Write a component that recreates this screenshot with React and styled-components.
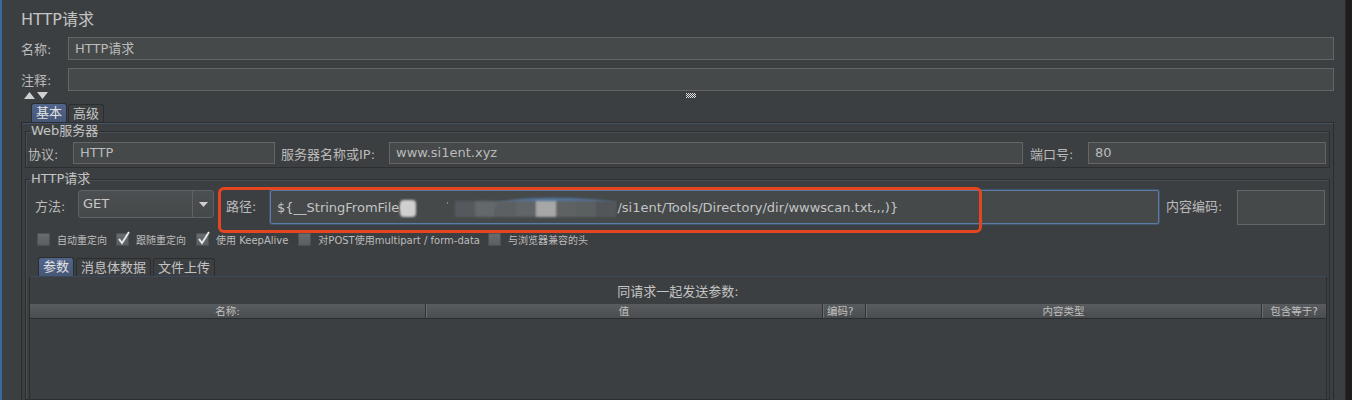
import React from 'react';
import styled, { createGlobalStyle } from 'styled-components';

const GlobalStyle = createGlobalStyle`
  html, body {
    margin: 0;
    padding: 0;
    height: 400px;
    overflow: hidden;
    background: #3c3f41;
  }
  body {
    font-family: "DejaVu Sans", "Noto Sans CJK SC", sans-serif;
    color: #bbbbbb;
  }
`;

const Page = styled.div`
  display: flex;
  height: 400px;
`;

const LeftEdge = styled.div`
  width: 2px;
  background: #3b6a9c;
`;

const RightEdge = styled.div`
  width: 7px;
  background: #201c1e;
  border-left: 1px solid #2c2a2c;
  box-sizing: border-box;
`;

const Main = styled.div`
  flex: 1;
  min-width: 0;
  display: flex;
  flex-direction: column;
  padding: 0 11px 0 19px;
`;

const Title = styled.div`
  height: 37px;
  box-sizing: border-box;
  padding-top: 10px;
  font-size: 16px;
  line-height: 20px;
  color: #c4c4c4;
`;

const FieldRow = styled.div`
  display: grid;
  grid-template-columns: 47px 1fr;
  align-items: center;
  height: 23px;
  margin-bottom: ${({ $gap }) => $gap || 0}px;
`;

const Label = styled.span`
  font-size: 13px;
  white-space: nowrap;
  padding-left: ${({ $pad }) => $pad || 0}px;
  line-height: ${({ $h }) => ($h ? `${$h}px` : 'normal')};
`;

const TextBox = styled.div`
  height: ${({ $h }) => $h || 23}px;
  box-sizing: border-box;
  background: #45494a;
  border: 1px solid #656565;
  font-size: 13px;
  line-height: ${({ $h }) => ($h || 23) - 2}px;
  padding: 0 6px;
  color: #bbbbbb;
  white-space: nowrap;
  overflow: hidden;
`;

const Toolbar = styled.div`
  display: flex;
  align-items: flex-start;
  height: 13px;
  padding: 1px 0 0 3px;
  box-sizing: border-box;
`;

const Splitter = styled.svg`
  margin: 1px 0 0 637px;
`;

const TabStrip = styled.div`
  display: flex;
  align-items: flex-end;
  height: 18px;
  padding-left: ${({ $pad }) => $pad}px;
  margin-top: ${({ $top }) => $top || 0}px;
`;

const Tab = styled.div`
  height: ${({ $active }) => ($active ? 19 : 18)}px;
  box-sizing: border-box;
  padding: 0 4px;
  margin-right: ${({ $gap }) => $gap || 1}px;
  font-size: 13px;
  line-height: 17px;
  border: 1px solid #2b2d2f;
  border-bottom: none;
  border-radius: 3px 3px 0 0;
  background: ${({ $active }) =>
    $active ? 'linear-gradient(#51648a, #465777)' : '#3c3f41'};
  color: ${({ $active }) => ($active ? '#e2e2e2' : '#c4c4c4')};
  position: relative;
  z-index: 1;
`;

const TabPanel = styled.div`
  flex: 1;
  min-height: 0;
  border: 1px solid #2a2c2e;
  border-bottom: none;
  box-shadow: inset 0 1px 0 #47526a;
  padding: 1px 3px 0 3px;
  display: flex;
  flex-direction: column;
`;

const Group = styled.fieldset`
  margin: ${({ $top }) => $top || 0}px 0 0 0;
  padding: ${({ $pad }) => $pad};
  border: 1px solid #2c2e30;
  box-shadow: inset 1px 1px 0 #4a4d4f;
  min-width: 0;
  flex: ${({ $grow }) => ($grow ? 1 : 'none')};
  display: flex;
  flex-direction: column;
`;

const Legend = styled.legend`
  padding: 0 1px;
  margin-left: ${({ $ml }) => $ml}px;
  font-size: 13px;
  line-height: 14px;
  color: #c4c4c4;
`;

const ServerGrid = styled.div`
  display: grid;
  grid-template-columns: 45px 202px 114px 1fr 65px 238px;
  align-items: center;
  padding-top: 4px;
`;

const RequestRow = styled.div`
  position: relative;
  display: grid;
  grid-template-columns: 43px 136px 56px 1fr 78px 88px;
  align-items: start;
  padding: 4px 2px 0 6px;
`;

const Combo = styled.div`
  display: flex;
  height: 28px;
  box-sizing: border-box;
  border: 1px solid #5f6264;
  border-radius: 3px;
  background: linear-gradient(#4b4f51, #45494a);
`;

const ComboValue = styled.div`
  flex: 1;
  padding-left: 4px;
  font-size: 13px;
  line-height: 26px;
  color: #c8c8c8;
`;

const ComboArrow = styled.div`
  width: 20px;
  border-left: 1px solid #5f6264;
  display: flex;
  align-items: center;
  justify-content: center;
`;

const PathBox = styled.div`
  height: 34px;
  box-sizing: border-box;
  display: flex;
  align-items: center;
  background: #45494a;
  border: 1px solid #5b7ca4;
  border-radius: 2px;
  box-shadow: 0 0 0 1px rgba(70, 104, 146, 0.55);
  padding-left: 6px;
  font-size: 13px;
  color: #c4c4c4;
  white-space: nowrap;
  overflow: hidden;
`;

const Redaction = styled.svg`
  flex: none;
  margin-left: -7px;
`;

const Highlight = styled.div`
  position: absolute;
  left: 189px;
  top: 1px;
  width: 764px;
  height: 46px;
  box-sizing: border-box;
  border: 3px solid #e5451f;
  border-radius: 6px;
  pointer-events: none;
`;

const OptionRow = styled.div`
  display: flex;
  align-items: center;
  height: 13px;
  margin-top: 8px;
  padding-left: 8px;
`;

const Option = styled.div`
  display: flex;
  align-items: center;
  gap: 7px;
  margin-right: ${({ $gap }) => $gap}px;
  font-size: 10px;
  color: #bdbdbd;
  white-space: nowrap;
`;

const Box = styled.span`
  position: relative;
  width: 13px;
  height: 13px;
  border-radius: 2px;
  background: linear-gradient(#6a6d6f, #5a5d5f);
  box-shadow: inset 0 0 0 1px #4e5153;

  & > svg {
    position: absolute;
    left: 1px;
    top: -2px;
  }
`;

const InnerPanel = styled.div`
  flex: 1;
  border: 1px solid #2b2d2f;
  border-top-color: #3d4860;
  border-bottom: none;
  display: flex;
  flex-direction: column;
`;

const Caption = styled.div`
  height: 27px;
  box-sizing: border-box;
  padding-top: 7px;
  text-align: center;
  font-size: 13px;
  line-height: 15px;
  color: #c4c4c4;
`;

const HeaderRow = styled.div`
  display: grid;
  grid-template-columns: 396px 397px 43px 396px 1fr;
  height: 14px;
  background: linear-gradient(#595c5e, #4a4d4f);
  border-bottom: 1px solid #2b2d2f;
`;

const HeaderCell = styled.div`
  font-size: 10.5px;
  line-height: 14px;
  text-align: ${({ $left }) => ($left ? 'left' : 'center')};
  padding-left: ${({ $left }) => ($left ? 4 : 0)}px;
  color: #c0c0c0;
  border-right: ${({ $last }) => ($last ? 'none' : '1px solid #2f3133')};
  box-shadow: ${({ $last }) => ($last ? 'none' : '1px 0 0 #6a6d6f')};
  white-space: nowrap;
  overflow: hidden;
`;

const Check = ({ on }) => (
  <Box>
    {on && (
      <svg width="13" height="14" viewBox="0 0 13 14">
        <polyline points="2,8 5,12 12,1" fill="none" stroke="#e4e4e4" strokeWidth="2" />
      </svg>
    )}
  </Box>
);

const options = [
  ['自动重定向', false, 9],
  ['跟随重定向', true, 10],
  ['使用 KeepAlive', true, 10],
  ['对POST使用multipart / form-data', false, 8],
  ['与浏览器兼容的头', false, 0],
];

const columns = ['名称:', '值', '编码?', '内容类型', '包含等于?'];

const blocks = [
  [58, '#55595b'],
  [78, '#63676a'],
  [99, '#5d6163'],
  [119, '#616567'],
  [139, '#a7a7a7'],
  [159, '#5e6264'],
  [179, '#5a5e60'],
  [199, '#535759'],
];

const App = () => {
  return (
    <>
      <GlobalStyle />
      <Page>
        <LeftEdge />
        <Main>
          <Title>HTTP请求</Title>
          <FieldRow $gap={8}>
            <Label>名称:</Label>
            <TextBox>HTTP请求</TextBox>
          </FieldRow>
          <FieldRow>
            <Label>注释:</Label>
            <TextBox />
          </FieldRow>
          <Toolbar>
            <svg width="25" height="7" viewBox="0 0 25 7">
              <polygon points="0,7 5.5,0 11,7" fill="#cfcfcf" />
              <polygon points="13,0 24,0 18.5,7" fill="#cfcfcf" />
            </svg>
            <Splitter width="10" height="5" viewBox="0 0 10 5">
              {[0, 1, 2, 3, 4].map((r) =>
                [0, 2, 4, 6, 8].map((c) => (
                  <rect key={`${r}-${c}`} x={c + (r % 2)} y={r} width="1" height="1" fill="#e0e0e0" />
                ))
              )}
            </Splitter>
          </Toolbar>
          <TabStrip $pad={10}>
            <Tab $active>基本</Tab>
            <Tab>高级</Tab>
          </TabStrip>
          <TabPanel>
            <Group $pad="0 3px 3px 2px">
              <Legend $ml={2}>Web服务器</Legend>
              <ServerGrid>
                <Label>协议:</Label>
                <TextBox $h={22}>HTTP</TextBox>
                <Label $pad={6}>服务器名称或IP:</Label>
                <TextBox $h={22}>www.si1ent.xyz</TextBox>
                <Label $pad={7}>端口号:</Label>
                <TextBox $h={22}>80</TextBox>
              </ServerGrid>
            </Group>
            <Group $top={4} $pad="0 2px 0 3px" $grow>
              <Legend $ml={1}>HTTP请求</Legend>
              <RequestRow>
                <Label $h={34}>方法:</Label>
                <Combo>
                  <ComboValue>GET</ComboValue>
                  <ComboArrow>
                    <svg width="9" height="5" viewBox="0 0 9 5">
                      <polygon points="0,0 9,0 4.5,5" fill="#cfcfcf" />
                    </svg>
                  </ComboArrow>
                </Combo>
                <Label $pad={12} $h={34}>路径:</Label>
                <PathBox>
                  {'${__StringFromFile('}
                  <Redaction width="220" height="24" viewBox="0 -2 220 24">
                    <defs>
                      <filter id="soft" x="-10%" y="-40%" width="120%" height="180%">
                        <feGaussianBlur stdDeviation="0.9" />
                      </filter>
                    </defs>
                    <rect x="3" y="3" width="16" height="17" rx="4" fill="#cfcfcf" filter="url(#soft)" />
                    <rect x="50" y="5" width="1" height="2" fill="#8a8a8a" />
                    <path d="M80 9 Q140 -5 218 5 L218 10 L80 10 Z" fill="#52739b" filter="url(#soft)" />
                    <g filter="url(#soft)">
                      {blocks.map(([x, c]) => (
                        <rect key={x} x={x} y="4" width="20.5" height="16" fill={c} />
                      ))}
                    </g>
                  </Redaction>
                  {'/si1ent/Tools/Directory/dir/wwwscan.txt,,,)}'}
                </PathBox>
                <Label $pad={7} $h={34}>内容编码:</Label>
                <TextBox $h={35} />
                <Highlight />
              </RequestRow>
              <OptionRow>
                {options.map(([text, on, gap]) => (
                  <Option key={text} $gap={gap}>
                    <Check on={on} />
                    {text}
                  </Option>
                ))}
              </OptionRow>
              <TabStrip $pad={9} $top={12}>
                <Tab $active $gap={2}>参数</Tab>
                <Tab $gap={2}>消息体数据</Tab>
                <Tab>文件上传</Tab>
              </TabStrip>
              <InnerPanel>
                <Caption>同请求一起发送参数:</Caption>
                <HeaderRow>
                  {columns.map((c, i) => (
                    <HeaderCell key={c} $last={i === columns.length - 1} $left={i === 2}>
                      {c}
                    </HeaderCell>
                  ))}
                </HeaderRow>
              </InnerPanel>
            </Group>
          </TabPanel>
        </Main>
        <RightEdge />
      </Page>
    </>
  );
};

export default App;
